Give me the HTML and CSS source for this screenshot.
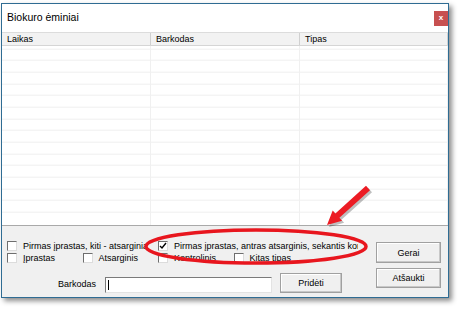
FILE: index.html
```html
<!DOCTYPE html>
<html lang="lt">
<head>
  <meta charset="UTF-8">
  <title>Biokuro ėminiai</title>
  <link rel="stylesheet" href="styles.css">
</head>
<body>

  <div class="window">
    <div class="titlebar">
      <span class="title">Biokuro ėminiai</span>
      <span class="close">x</span>
    </div>

    <div class="list">
      <div class="list-head">
        <div>Laikas</div>
        <div>Barkodas</div>
        <div>Tipas</div>
      </div>
      <div class="list-body">
        <div></div>
        <div></div>
        <div></div>
      </div>
    </div>

    <div class="controls">
      <div class="options">
        <div class="checks">
          <label class="check first"><span class="box"></span><span class="text">Pirmas įprastas, kiti - atsarginiai</span></label>
          <label class="check second"><span class="box"><svg width="8" height="8" viewBox="0 0 8 8"><path d="M1 4 L3 6 L7 1" fill="none" stroke="#000" stroke-width="1.4"/></svg></span><span class="text">Pirmas įprastas, antras atsarginis, sekantis kontrolinis</span></label>
          <label class="check"><span class="box"></span><span class="text">Įprastas</span></label>
          <label class="check"><span class="box"></span><span class="text">Atsarginis</span></label>
          <label class="check"><span class="box"></span><span class="text">Kontrolinis</span></label>
          <label class="check"><span class="box"></span><span class="text">Kitas tipas</span></label>
        </div>
        <div class="barcode-row">
          <span class="label">Barkodas</span>
          <span class="field"><span class="caret"></span></span>
          <button class="btn add">Pridėti</button>
        </div>
      </div>
      <div class="actions">
        <button class="btn ok">Gerai</button>
        <button class="btn cancel">Atšaukti</button>
      </div>
    </div>
  </div>

  <!-- annotation drawn over the screenshot -->
  <svg class="annot" width="459" height="309" viewBox="0 0 459 309">
    <polygon points="372,192.2 341.4,219.8 344.1,222.8 329,227 334.7,212.4 337.4,215.4 368,187.8" fill="#000" opacity="0.25"/>
    <polygon points="370,190.2 339.4,217.8 342.1,220.8 327,225 332.7,210.4 335.4,213.4 366,185.8" fill="#ec1c24"/>
    <ellipse cx="256" cy="246.5" rx="110" ry="16.5" fill="none" stroke="#e8161e" stroke-width="3.5"/>
  </svg>

</body>
</html>
```

FILE: styles.css
```css
* { box-sizing: border-box; }
body { margin: 0; width: 459px; height: 309px; background: #fff; font-family: "Liberation Sans", Arial, sans-serif; font-size: 9px; color: #000; position: relative; overflow: hidden; }

.window { margin: 3px 0 0 1px; width: 448px; height: 295px; border: 1px solid #2f6c93; background: #f0f0f0; box-shadow: 3px 3px 5px rgba(0,0,0,.45); display: flex; flex-direction: column; }

.titlebar { height: 28px; background: #fff; display: flex; justify-content: space-between; padding-left: 5px; }
.title { font-size: 10.5px; margin-top: 7px; }
.close { width: 14px; height: 15px; margin-top: 7px; background: #c75050; color: #fff; font-size: 8px; font-weight: bold; text-align: center; line-height: 14px; }

.list { height: 194px; background: #fff; border-bottom: 1px solid #a9a9a9; display: flex; flex-direction: column; }
.list-head { display: grid; grid-template-columns: 149px 149px 1fr; height: 14px; background: #f2f2f2; border-top: 1px solid #dcdcdc; border-bottom: 1px solid #d5d5d5; }
.list-head div { padding-left: 5px; line-height: 12px; border-right: 1px solid #d0d0d0; }
.list-body { flex: 1; display: grid; grid-template-columns: 149px 149px 1fr; background: repeating-linear-gradient(#fff 0 10.67px, #efefef 10.67px 11.67px); background-position: 0 -8.3px; }
.list-body div { border-right: 1px solid #f0f0f0; }

.controls { flex: 1; display: flex; }
.options { flex: 1; padding: 14px 0 0 5px; }
.checks { display: grid; grid-template-columns: repeat(4, 75.5px); grid-auto-rows: 12px; }
.check { display: flex; align-items: center; gap: 6px; white-space: nowrap; overflow: hidden; }
.check.first { grid-column: 1 / span 2; width: 139px; }
.check.second { grid-column: 3 / span 2; width: 200px; }
.box { width: 10px; height: 10px; flex: none; background: #fff; border: 1px solid; border-color: #6e6e6e #dcdcdc #dcdcdc #6e6e6e; display: flex; align-items: center; justify-content: center; }

.barcode-row { display: flex; align-items: flex-start; margin-top: 9px; }
.label { margin: 6px 9px 0 51px; }
.field { width: 167px; height: 16px; margin-top: 4px; background: #fff; border: 1px solid; border-color: #7a7a7a #e3e3e3 #e3e3e3 #7a7a7a; padding: 2px 0 0 2px; }
.caret { display: block; width: 1px; height: 10px; background: #000; }

.btn { font-family: inherit; font-size: 9px; color: #000; background: #f0f0f0; border: 1px solid #a0a0a0; box-shadow: inset -1px -1px #c8c8c8, inset 1px 1px #fff; padding: 0; }
.add { width: 62px; height: 20px; margin-left: 8px; }

.actions { width: 65px; margin-right: 7px; padding-top: 16px; display: flex; flex-direction: column; gap: 5px; }
.ok { height: 21px; }
.cancel { height: 20px; }

.annot { position: absolute; top: 0; left: 0; pointer-events: none; }
```
